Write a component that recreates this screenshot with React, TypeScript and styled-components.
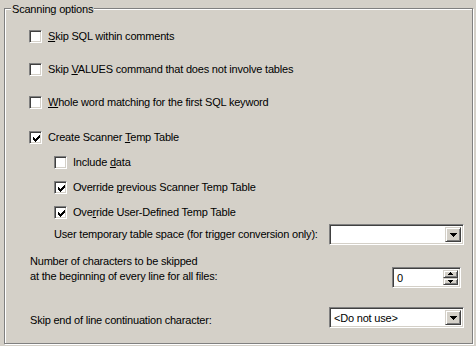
import React from "react";
import styled, { createGlobalStyle } from "styled-components";

const GlobalStyle = createGlobalStyle`
  html, body {
    margin: 0;
    padding: 0;
    background: #d4d0c8;
  }
  body {
    font-family: "Liberation Sans", Arial, sans-serif;
    font-size: 11px;
    color: #000;
  }
`;

const Page = styled.div`
  width: 476px;
  height: 346px;
  padding: 8px 0 0 4px;
  box-sizing: border-box;
  background: #d4d0c8;
`;

const GroupBox = styled.div`
  position: relative;
  box-sizing: border-box;
  width: 469px;
  height: 336px;
  border: 1px solid #808080;
  box-shadow: inset 1px 1px 0 #fff, 1px 1px 0 #fff;
  padding: 21px 8px 0 24px;
  display: flex;
  flex-direction: column;
`;

const Legend = styled.span`
  position: absolute;
  top: -7px;
  left: 6px;
  padding: 0 1px;
  line-height: 15px;
  background: #d4d0c8;
  letter-spacing: -0.2px;
`;

const Row = styled.div<{ $mt?: number; $indent?: number }>`
  display: flex;
  align-items: center;
  margin-top: ${(p) => p.$mt ?? 0}px;
  padding-left: ${(p) => p.$indent ?? 0}px;
  min-height: 13px;
`;

const SplitRow = styled(Row)`
  justify-content: space-between;
  align-items: flex-start;
`;

const Label = styled.span<{ $mt?: number }>`
  line-height: 13px;
  letter-spacing: -0.2px;
  white-space: nowrap;
  margin-top: ${(p) => p.$mt ?? 0}px;
`;

const TextBlock = styled.div<{ $mt?: number }>`
  line-height: 15px;
  letter-spacing: -0.2px;
  margin-top: ${(p) => p.$mt ?? 0}px;
  padding-left: 1px;
`;

const Key = styled.u`
  text-decoration: underline;
  text-underline-offset: 1px;
`;

const Box = styled.span`
  position: relative;
  flex: none;
  box-sizing: border-box;
  width: 13px;
  height: 13px;
  margin-right: 6px;
  background: #fff;
  border: 1px solid;
  border-color: #808080 #fff #fff #808080;
  box-shadow: inset 1px 1px 0 #404040, inset -1px -1px 0 #d4d0c8;
  svg {
    position: absolute;
    left: 2px;
    top: 2px;
  }
`;

const Sunken = styled.div<{ $w: number; $mt?: number; $mr?: number }>`
  box-sizing: border-box;
  flex: none;
  width: ${(p) => p.$w}px;
  height: 21px;
  margin-top: ${(p) => p.$mt ?? 0}px;
  margin-right: ${(p) => p.$mr ?? 0}px;
  background: #fff;
  border: 1px solid;
  border-color: #808080 #fff #fff #808080;
  box-shadow: inset 1px 1px 0 #404040, inset -1px -1px 0 #d4d0c8;
  padding: 2px;
  display: flex;
  align-items: stretch;
`;

const FieldText = styled.span`
  flex: 1;
  line-height: 17px;
  padding-left: 2px;
  letter-spacing: -0.2px;
  white-space: nowrap;
`;

const RaisedButton = styled.span<{ $w: number }>`
  box-sizing: border-box;
  flex: 1;
  width: ${(p) => p.$w}px;
  background: #d4d0c8;
  border: 1px solid;
  border-color: #d4d0c8 #404040 #404040 #d4d0c8;
  box-shadow: inset 1px 1px 0 #fff, inset -1px -1px 0 #808080;
  display: flex;
  align-items: center;
  justify-content: center;
`;

const SpinStack = styled.span`
  display: flex;
  flex-direction: column;
  width: 15px;
`;

const Check = () => (
  <svg width="9" height="9" viewBox="0 0 9 9" shapeRendering="crispEdges">
    <g fill="#000" transform="translate(1 1)">
      <rect x="6" y="0" width="1" height="1" />
      <rect x="5" y="1" width="2" height="1" />
      <rect x="0" y="2" width="1" height="1" />
      <rect x="4" y="2" width="3" height="1" />
      <rect x="0" y="3" width="2" height="1" />
      <rect x="3" y="3" width="3" height="1" />
      <rect x="0" y="4" width="5" height="1" />
      <rect x="1" y="5" width="3" height="1" />
      <rect x="2" y="6" width="1" height="1" />
    </g>
  </svg>
);

const Arrow: React.FC<{ size: number; up?: boolean }> = ({ size, up }) => {
  const h = Math.ceil(size / 2);
  const rows = Array.from({ length: h }, (_, i) => i);
  return (
    <svg width={size} height={h} shapeRendering="crispEdges">
      {rows.map((i) => {
        const y = up ? h - 1 - i : i;
        return <rect key={i} x={i} y={y} width={size - 2 * i} height={1} fill="#000" />;
      })}
    </svg>
  );
};

const CheckBox: React.FC<{ checked?: boolean; children: React.ReactNode; $mt: number; $indent?: number }> = ({
  checked,
  children,
  $mt,
  $indent,
}) => (
  <Row $mt={$mt} $indent={$indent}>
    <Box>{checked && <Check />}</Box>
    <Label>{children}</Label>
  </Row>
);

const Combo: React.FC<{ value?: string; $mt?: number }> = ({ value, $mt }) => (
  <Sunken $w={135} $mt={$mt}>
    <FieldText>{value}</FieldText>
    <RaisedButton $w={16} style={{ flex: "none" }}>
      <Arrow size={7} />
    </RaisedButton>
  </Sunken>
);

export default function App() {
  return (
    <>
      <GlobalStyle />
      <Page>
        <GroupBox>
          <Legend>Scanning options</Legend>
          <CheckBox $mt={0}>
            <Key>S</Key>kip SQL within comments
          </CheckBox>
          <CheckBox $mt={20}>
            Skip <Key>V</Key>ALUES command that does not involve tables
          </CheckBox>
          <CheckBox $mt={20}>
            <Key>W</Key>hole word matching for the first SQL keyword
          </CheckBox>
          <CheckBox $mt={22} checked>
            Create Scanner <Key>T</Key>emp Table
          </CheckBox>
          <CheckBox $mt={12} $indent={25}>
            Include <Key>d</Key>ata
          </CheckBox>
          <CheckBox $mt={12} $indent={25} checked>
            Override <Key>p</Key>revious Scanner Temp Table
          </CheckBox>
          <CheckBox $mt={12} $indent={25} checked>
            Ove<Key>r</Key>ride User-Defined Temp Table
          </CheckBox>
          <SplitRow $mt={5} $indent={25} style={{ alignItems: "center" }}>
            <Label>User temporary table space (for trigger conversion only):</Label>
            <Combo />
          </SplitRow>
          <SplitRow $mt={9}>
            <TextBlock>
              Number of characters to be skipped
              <br />
              at the beginning of every line for all files:
            </TextBlock>
            <Sunken $w={69} $mt={13} $mr={3}>
              <FieldText>0</FieldText>
              <SpinStack>
                <RaisedButton $w={15}>
                  <Arrow size={5} up />
                </RaisedButton>
                <RaisedButton $w={15}>
                  <Arrow size={5} />
                </RaisedButton>
              </SpinStack>
            </Sunken>
          </SplitRow>
          <SplitRow $mt={19}>
            <TextBlock $mt={6}>Skip end of line continuation character:</TextBlock>
            <Combo value="<Do not use>" />
          </SplitRow>
        </GroupBox>
      </Page>
    </>
  );
}
